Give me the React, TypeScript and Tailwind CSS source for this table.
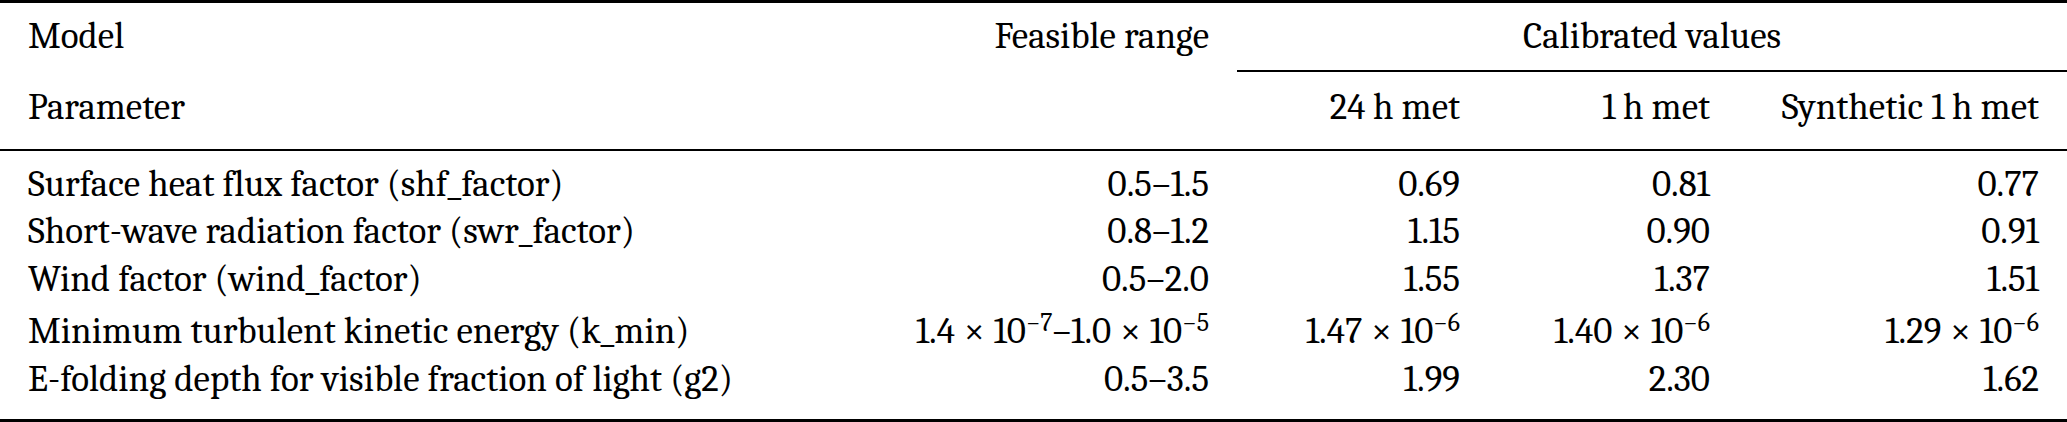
import React from 'react';

type Row = {
  name: string;
  range: React.ReactNode;
  values: React.ReactNode[];
  height: string;
};

const Sci = ({ m, e }: { m: string; e: string }) => (
  <span className="whitespace-nowrap">
    {m}
    <span className="mx-[9px]">×</span>
    10
    <span className="text-[26px] leading-none align-[12px]">−{e}</span>
  </span>
);

const rows: Row[] = [
  { name: 'Surface heat flux factor (shf_factor)', range: '0.5–1.5', values: ['0.69', '0.81', '0.77'], height: 'h-[47px]' },
  { name: 'Short-wave radiation factor (swr_factor)', range: '0.8–1.2', values: ['1.15', '0.90', '0.91'], height: 'h-[47px]' },
  { name: 'Wind factor (wind_factor)', range: '0.5–2.0', values: ['1.55', '1.37', '1.51'], height: 'h-[48px]' },
  {
    name: 'Minimum turbulent kinetic energy (k_min)',
    range: (
      <>
        <Sci m="1.4" e="7" />–<Sci m="1.0" e="5" />
      </>
    ),
    values: [<Sci m="1.47" e="6" />, <Sci m="1.40" e="6" />, <Sci m="1.29" e="6" />],
    height: 'h-[52px]',
  },
  { name: 'E-folding depth for visible fraction of light (g2)', range: '0.5–3.5', values: ['1.99', '2.30', '1.62'], height: 'h-[48px]' },
];

const grid = 'grid grid-cols-[806px_431px_251px_250px_329px] items-end';
const cell = 'px-[28px] leading-[47px] whitespace-nowrap';

export default function App() {
  return (
    <div className="w-[2067px] h-[422px] bg-white text-black text-[37px] font-serif flex flex-col">
      {/* top rule */}
      <div className="h-[3px] bg-black" />

      {/* header line 1 */}
      <div className={`${grid} mt-[10px] h-[47px]`}>
        <div className={cell}>Model</div>
        <div className={`${cell} text-right`}>Feasible range</div>
        <div className={`${cell} col-span-3 text-center`}>Calibrated values</div>
      </div>

      {/* cmidrule under Calibrated values */}
      <div className={`${grid} mt-[10px]`}>
        <div className="col-start-3 col-span-3 h-[2px] bg-black" />
      </div>

      {/* header line 2 */}
      <div className={`${grid} mt-[12px] h-[47px]`}>
        <div className={cell}>Parameter</div>
        <div className={cell} />
        <div className={`${cell} text-right`}>24&#8201;h met</div>
        <div className={`${cell} text-right`}>1&#8201;h met</div>
        <div className={`${cell} text-right`}>Synthetic 1&#8201;h met</div>
      </div>

      {/* midrule */}
      <div className="mt-[18px] h-[2px] bg-black" />

      <div className="mt-[10px] flex flex-col">
        {rows.map((r) => (
          <div key={r.name} className={`${grid} ${r.height}`}>
            <div className={cell}>{r.name}</div>
            <div className={`${cell} text-right`}>{r.range}</div>
            {r.values.map((v, i) => (
              <div key={i} className={`${cell} text-right`}>
                {v}
              </div>
            ))}
          </div>
        ))}
      </div>

      {/* bottom rule */}
      <div className="mt-[16px] h-[3px] bg-black" />
    </div>
  );
}
